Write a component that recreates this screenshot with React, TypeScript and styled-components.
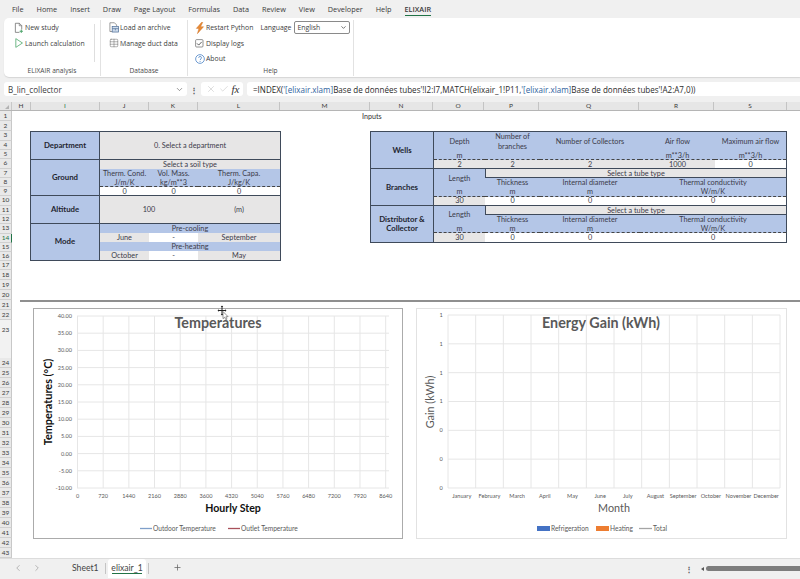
import { FC, ReactNode } from 'react';
import styled, { createGlobalStyle } from 'styled-components';
import { Check, ChevronDown, ChevronLeft, ChevronRight, Plus, Table, X } from 'lucide-react';

const GlobalStyle = createGlobalStyle`
  html, body {
    margin: 0;
    padding: 0;
    background: #fff;
  }
  #root {
    width: 800px;
    height: 579px;
    overflow: hidden;
  }
`;

const UI = `"Open Sans", "Noto Sans", sans-serif`;
const CELL = `Lato, "Liberation Sans", sans-serif`;
const BLUE = '#b4c6e7';
const GRAY = '#e7e6e6';
const EDGE = '#3f4a5a';

const Page = styled.div`
  position: relative;
  width: 800px;
  height: 579px;
  display: flex;
  flex-direction: column;
  background: #f0f0f0;
  font-family: ${UI};
  color: #333;
  overflow: hidden;
`;

/* ---------- ribbon ---------- */

const TabBar = styled.div`
  height: 18px;
  display: flex;
  align-items: center;
  gap: 13px;
  padding-left: 12px;
  font-size: 7.3px;
  color: #3a3a3a;
`;

const RibbonTab = styled.span<{ $active?: boolean }>`
  position: relative;
  line-height: 18px;
  font-weight: ${({ $active }) => ($active ? 600 : 400)};

  &::after {
    content: '';
    display: ${({ $active }) => ($active ? 'block' : 'none')};
    position: absolute;
    left: 0;
    right: 0;
    bottom: 2px;
    height: 1.5px;
    background: #217346;
  }
`;

const Ribbon = styled.div`
  height: 60px;
  margin-left: 4px;
  display: flex;
  background: #fff;
  border-radius: 5px 0 0 5px;
  box-shadow: 0 1px 1px #d5d5d5;
`;

const RibbonGroup = styled.div<{ $width: number; $pad: number }>`
  position: relative;
  box-sizing: border-box;
  width: ${({ $width }) => $width}px;
  height: 56px;
  margin-top: 2px;
  border-right: 1px solid #e2e2e2;
  padding-left: ${({ $pad }) => $pad}px;
`;

const GroupLabel = styled.div`
  position: absolute;
  left: 0;
  right: 0;
  top: 46px;
  text-align: center;
  font-size: 6.6px;
  line-height: 10px;
  color: #4a4a4a;
`;

const GroupDivider = styled.div`
  position: absolute;
  left: 90px;
  top: 4px;
  height: 38px;
  width: 1px;
  background: #dedede;
`;

const ActionRow = styled.div`
  height: 15.5px;
  display: flex;
  align-items: center;
  font-size: 6.9px;
  color: #404040;
  white-space: nowrap;
`;

const IconSlot = styled.span`
  width: 11px;
  height: 12px;
  flex: none;
  display: flex;
  align-items: center;
  justify-content: flex-start;
`;

const LanguageLabel = styled.span`
  margin-left: 7px;
`;

const LanguageSelect = styled.div`
  box-sizing: border-box;
  flex: none;
  width: 56px;
  height: 13px;
  margin-left: 3px;
  padding: 0 2px;
  display: flex;
  align-items: center;
  justify-content: space-between;
  border: 1px solid #8a8a8a;
  border-radius: 2px;
`;

/* ---------- formula bar ---------- */

const FormulaBar = styled.div`
  height: 15px;
  margin-top: 5px;
  padding-left: 4px;
  display: flex;
  align-items: stretch;
  font-size: 8.1px;
  white-space: nowrap;
`;

const NameBox = styled.div`
  width: 183px;
  padding: 0 3px 0 4px;
  box-sizing: border-box;
  display: flex;
  align-items: center;
  justify-content: space-between;
  background: #fff;
  border-radius: 3px;
  color: #404040;
`;

const Grip = styled.div`
  width: 14px;
  display: flex;
  align-items: center;
  justify-content: center;
  font-weight: 700;
  font-size: 8px;
  color: #555;
`;

const FormulaButtons = styled.div`
  width: 42px;
  display: flex;
  align-items: center;
  justify-content: space-around;
  padding: 0 2px 0 3px;
  box-sizing: border-box;
  background: #fff;
  border-radius: 3px;
`;

const FxMark = styled.span`
  font-family: "Liberation Serif", serif;
  font-style: italic;
  font-size: 11px;
  color: #333;
`;

const FormulaInput = styled.div`
  flex: 1;
  margin-left: 4px;
  padding-left: 6px;
  display: flex;
  align-items: center;
  background: #fff;
  border-radius: 3px 0 0 3px;
  font-size: 8.05px;
  color: #2b2b2b;
`;

const Ref = styled.span`
  color: #2f5f9e;
`;

/* ---------- sheet headers ---------- */

const ColumnHeader = styled.div`
  height: 8px;
  margin-top: 6px;
  display: flex;
  background: #e6e6e6;
  border-bottom: 1px solid #b5b5b5;
  box-sizing: content-box;
`;

const CornerCell = styled.div`
  position: relative;
  width: 12px;
  flex: none;
  box-sizing: border-box;
  border-right: 1px solid #c8c8c8;

  &::after {
    content: '';
    position: absolute;
    right: 2px;
    bottom: 1px;
    border-style: solid;
    border-width: 0 0 4px 4px;
    border-color: transparent transparent #b3b3b3 transparent;
  }
`;

const ColumnCell = styled.div<{ $width: number; $active?: boolean }>`
  width: ${({ $width }) => $width}px;
  flex: none;
  box-sizing: border-box;
  border-right: 1px solid #c4c4c4;
  text-align: center;
  font-family: ${CELL};
  font-size: 6.5px;
  line-height: 8px;
  color: ${({ $active }) => ($active ? '#217346' : '#3c3c3c')};
`;

const SheetBody = styled.div`
  height: 447px;
  display: flex;
  background: #fff;
`;

const RowHeader = styled.div`
  width: 12px;
  flex: none;
  display: flex;
  flex-direction: column;
  background: #e9e9e9;
`;

const RowCell = styled.div<{ $height: number; $active?: boolean; $tall?: boolean }>`
  height: ${({ $height }) => $height}px;
  box-sizing: border-box;
  border-bottom: ${({ $tall }) => ($tall ? 'none' : '1px solid #d0d0d0')};
  border-right: 1px solid ${({ $active }) => ($active ? '#217346' : '#c8c8c8')};
  text-align: center;
  font-family: ${CELL};
  font-size: 6.5px;
  line-height: ${({ $tall, $height }) => ($tall ? '20px' : `${$height - 1}px`)};
  color: ${({ $active }) => ($active ? '#217346' : '#3c3c3c')};
  background: ${({ $tall }) => ($tall ? '#f2f2f2' : 'transparent')};
`;

const Canvas = styled.div`
  flex: 1;
  display: flex;
  flex-direction: column;
  font-family: ${CELL};
`;

const SheetTitle = styled.div`
  height: 20px;
  padding-left: 350px;
  font-size: 7.2px;
  line-height: 11px;
  color: #333;
`;

const TablesRow = styled.div`
  height: 130px;
  padding-left: 18px;
  display: flex;
  gap: 89px;
  align-items: flex-start;
`;

const SectionLine = styled.div`
  height: 1.5px;
  margin: 39px 0 6.5px 8px;
  background: #8f8f8f;
`;

const ChartsRow = styled.div`
  padding-left: 21px;
  display: flex;
  gap: 13px;
`;

/* ---------- input tables ---------- */

const InputTable = styled.div<{ $columns: string; $rows: number; $height: number }>`
  box-sizing: border-box;
  height: ${({ $height }) => $height}px;
  display: grid;
  grid-template-columns: ${({ $columns }) => $columns};
  grid-template-rows: repeat(${({ $rows }) => $rows}, minmax(0, 1fr));
  border: 1px solid ${EDGE};
  font-size: 7.3px;
  color: #3b3b4a;
  background: ${GRAY};
`;

interface ICellProps {
  $col: string;
  $row: string;
  $fill?: string;
  $bold?: boolean;
  $dashed?: boolean;
  $line?: boolean;
  $rightLine?: boolean;
  $leftLine?: boolean;
}

const Cell = styled.div<ICellProps>`
  grid-column: ${({ $col }) => $col};
  grid-row: ${({ $row }) => $row};
  box-sizing: border-box;
  min-width: 0;
  min-height: 0;
  padding-top: ${({ $line, $dashed }) => ($line || $dashed ? '1px' : '0')};
  display: flex;
  align-items: center;
  justify-content: center;
  text-align: center;
  line-height: 9.5px;
  white-space: pre-line;
  background: ${({ $fill }) => $fill || 'transparent'};
  font-weight: ${({ $bold }) => ($bold ? 700 : 400)};
  color: ${({ $bold }) => ($bold ? '#1f2530' : 'inherit')};
  font-size: ${({ $bold }) => ($bold ? '7.8px' : 'inherit')};
  border-bottom: ${({ $dashed, $line }) =>
    $line ? `1px solid ${EDGE}` : $dashed ? '1px dashed #444' : 'none'};
  border-right: ${({ $rightLine }) => ($rightLine ? `1px solid ${EDGE}` : 'none')};
  border-left: ${({ $leftLine }) => ($leftLine ? `1px solid ${EDGE}` : 'none')};
`;

const LeftTable: FC = () => (
  <InputTable $columns="69px 49px 49px 82px" $rows={14} $height={130}>
    <Cell $col="1" $row="1 / 4" $fill={BLUE} $bold $line $rightLine>Department</Cell>
    <Cell $col="2 / 5" $row="1 / 4" $fill={GRAY} $line>0. Select a department</Cell>

    <Cell $col="1" $row="4 / 8" $fill={BLUE} $bold $line $rightLine>Ground</Cell>
    <Cell $col="2 / 5" $row="4" $fill={GRAY}>Select a soil type</Cell>
    <Cell $col="2" $row="5" $fill={BLUE}>Therm. Cond.</Cell>
    <Cell $col="3" $row="5" $fill={BLUE}>Vol. Mass.</Cell>
    <Cell $col="4" $row="5" $fill={BLUE}>Therm. Capa.</Cell>
    <Cell $col="2" $row="6" $fill={BLUE} $dashed>J/m/K</Cell>
    <Cell $col="3" $row="6" $fill={BLUE} $dashed>kg/m**3</Cell>
    <Cell $col="4" $row="6" $fill={BLUE} $dashed>J/kg/K</Cell>
    <Cell $col="2" $row="7" $fill="#fff" $line>0</Cell>
    <Cell $col="3" $row="7" $fill="#fff" $line>0</Cell>
    <Cell $col="4" $row="7" $fill="#fff" $line>0</Cell>

    <Cell $col="1" $row="8 / 11" $fill={BLUE} $bold $line $rightLine>Altitude</Cell>
    <Cell $col="2 / 4" $row="8 / 11" $fill={GRAY} $line>100</Cell>
    <Cell $col="4" $row="8 / 11" $fill={GRAY} $line>(m)</Cell>

    <Cell $col="1" $row="11 / 15" $fill={BLUE} $bold $rightLine>Mode</Cell>
    <Cell $col="2 / 5" $row="11" $fill={BLUE}>Pre-cooling</Cell>
    <Cell $col="2" $row="12" $fill={GRAY}>June</Cell>
    <Cell $col="3" $row="12" $fill="#fff">-</Cell>
    <Cell $col="4" $row="12" $fill={GRAY}>September</Cell>
    <Cell $col="2 / 5" $row="13" $fill={BLUE}>Pre-heating</Cell>
    <Cell $col="2" $row="14" $fill={GRAY}>October</Cell>
    <Cell $col="3" $row="14" $fill="#fff">-</Cell>
    <Cell $col="4" $row="14" $fill={GRAY}>May</Cell>
  </InputTable>
);

const TubeSection: FC<{ label: string; start: number; last?: boolean }> = ({ label, start, last }) => (
  <>
    <Cell $col="1" $row={`${start} / ${start + 4}`} $fill={BLUE} $bold $line={!last} $rightLine>{label}</Cell>
    <Cell $col="2" $row={`${start} / ${start + 2}`} $fill={BLUE}>Length</Cell>
    <Cell $col="3 / 7" $row={`${start}`} $fill={GRAY} $line $leftLine>Select a tube type</Cell>
    <Cell $col="3" $row={`${start + 1}`} $fill={BLUE}>Thickness</Cell>
    <Cell $col="4" $row={`${start + 1}`} $fill={BLUE}>Internal diameter</Cell>
    <Cell $col="5 / 7" $row={`${start + 1}`} $fill={BLUE}>Thermal conductivity</Cell>
    <Cell $col="2" $row={`${start + 2}`} $fill={BLUE} $dashed>m</Cell>
    <Cell $col="3" $row={`${start + 2}`} $fill={BLUE} $dashed>m</Cell>
    <Cell $col="4" $row={`${start + 2}`} $fill={BLUE} $dashed>m</Cell>
    <Cell $col="5 / 7" $row={`${start + 2}`} $fill={BLUE} $dashed>W/m/K</Cell>
    <Cell $col="2" $row={`${start + 3}`} $fill={GRAY} $line={!last}>30</Cell>
    <Cell $col="3" $row={`${start + 3}`} $fill="#fff" $line={!last}>0</Cell>
    <Cell $col="4" $row={`${start + 3}`} $fill="#fff" $line={!last}>0</Cell>
    <Cell $col="5 / 7" $row={`${start + 3}`} $fill="#fff" $line={!last}>0</Cell>
  </>
);

const RightTable: FC = () => (
  <InputTable $columns="63px 51px 55px 100px 75px 71px" $rows={12} $height={112}>
    <Cell $col="1" $row="1 / 5" $fill={BLUE} $bold $line $rightLine>Wells</Cell>
    <Cell $col="2" $row="1 / 3" $fill={BLUE}>Depth</Cell>
    <Cell $col="3" $row="1 / 3" $fill={BLUE}>{'Number of\nbranches'}</Cell>
    <Cell $col="4" $row="1 / 3" $fill={BLUE}>Number of Collectors</Cell>
    <Cell $col="5" $row="1 / 3" $fill={BLUE}>Air flow</Cell>
    <Cell $col="6" $row="1 / 3" $fill={BLUE}>Maximum air flow</Cell>
    <Cell $col="2" $row="3" $fill={BLUE} $dashed>m</Cell>
    <Cell $col="3" $row="3" $fill={BLUE} $dashed />
    <Cell $col="4" $row="3" $fill={BLUE} $dashed />
    <Cell $col="5" $row="3" $fill={BLUE} $dashed>m**3/h</Cell>
    <Cell $col="6" $row="3" $fill={BLUE} $dashed>m**3/h</Cell>
    <Cell $col="2" $row="4" $fill={GRAY} $line>2</Cell>
    <Cell $col="3" $row="4" $fill={GRAY} $line>2</Cell>
    <Cell $col="4" $row="4" $fill={GRAY} $line>2</Cell>
    <Cell $col="5" $row="4" $fill={GRAY} $line>1000</Cell>
    <Cell $col="6" $row="4" $fill="#fff" $line>0</Cell>
    <TubeSection label="Branches" start={5} />
    <TubeSection label={'Distributor &\nCollector'} start={9} last />
  </InputTable>
);

/* ---------- charts ---------- */

const ChartCard = styled.div<{ $width: number; $soft?: boolean }>`
  box-sizing: border-box;
  width: ${({ $width }) => $width}px;
  height: 231px;
  background: #fff;
  border: 1px solid ${({ $soft }) => ($soft ? '#e2e2e2' : '#ababab')};
`;

const ChartSvg = styled.svg`
  display: block;
  font-family: ${CELL};
`;

const GridLine = styled.line`
  stroke: #e6e6e6;
  stroke-width: 1;
`;

const AxisText = styled.text`
  font-size: 5.6px;
  fill: #595959;
`;

const ChartTitle = styled.text`
  font-size: 14.3px;
  font-weight: 700;
  fill: #595959;
`;

const AxisTitle = styled.text<{ $strong?: boolean; $size: number }>`
  font-size: ${({ $size }) => $size}px;
  font-weight: ${({ $strong }) => ($strong ? 700 : 400)};
  fill: ${({ $strong }) => ($strong ? '#111' : '#595959')};
`;

const LegendText = styled.text`
  font-size: 6.6px;
  fill: #595959;
`;

const TemperatureChart: FC = () => {
  const hours = Array.from({ length: 13 }, (_, i) => i * 720);
  const temps = Array.from({ length: 11 }, (_, i) => 40 - i * 5);
  const xAt = (i: number) => 77.5 + i * 25.68;
  const yAt = (i: number) => 316 + i * 17.2;

  return (
    <ChartCard $width={370}>
      <ChartSvg width={368} height={229} viewBox="34 309 368 229">
        {temps.map((t, i) => (
          <g key={t}>
            <GridLine x1={77} x2={389} y1={yAt(i)} y2={yAt(i)} />
            <AxisText x={72} y={yAt(i) + 2} textAnchor="end">{t.toFixed(2)}</AxisText>
          </g>
        ))}
        {hours.map((h, i) => (
          <g key={h}>
            <GridLine x1={xAt(i)} x2={xAt(i)} y1={316} y2={488} />
            <AxisText x={xAt(i)} y={498} textAnchor="middle">{h}</AxisText>
          </g>
        ))}
        <ChartTitle x={218} y={328} textAnchor="middle">Temperatures</ChartTitle>
        <AxisTitle $strong $size={10.9} textAnchor="middle" transform="translate(52 402) rotate(-90)">
          Temperatures (°C)
        </AxisTitle>
        <AxisTitle $strong $size={10.6} x={233} y={512} textAnchor="middle">Hourly Step</AxisTitle>
        <line x1={140} x2={152} y1={528.5} y2={528.5} stroke="#7f9fca" strokeWidth={1.3} />
        <LegendText x={153} y={531}>Outdoor Temperature</LegendText>
        <line x1={228} x2={240} y1={528.5} y2={528.5} stroke="#a8505a" strokeWidth={1.3} />
        <LegendText x={241} y={531}>Outlet Temperature</LegendText>
      </ChartSvg>
    </ChartCard>
  );
};

const MONTHS = ['January', 'February', 'March', 'April', 'May', 'June', 'July', 'August', 'September', 'October', 'November', 'December'];
const GAIN_TICKS = ['1', '1', '1', '1', '0', '0', '0'];

const EnergyChart: FC = () => {
  const xAt = (i: number) => 448 + i * 27.67;
  const yAt = (i: number) => 315 + i * 28.83;

  return (
    <ChartCard $width={371} $soft>
      <ChartSvg width={369} height={229} viewBox="417 309 369 229">
        {GAIN_TICKS.map((t, i) => (
          <g key={i}>
            <GridLine x1={448} x2={780} y1={yAt(i)} y2={yAt(i)} />
            <AxisText x={441} y={yAt(i) + 2} textAnchor="middle">{t}</AxisText>
          </g>
        ))}
        {Array.from({ length: 13 }, (_, i) => (
          <GridLine key={i} x1={xAt(i)} x2={xAt(i)} y1={315} y2={488} />
        ))}
        {MONTHS.map((m, i) => (
          <AxisText key={m} x={xAt(i) + 13.8} y={498} textAnchor="middle">{m}</AxisText>
        ))}
        <ChartTitle x={601} y={328} textAnchor="middle">Energy Gain (kWh)</ChartTitle>
        <AxisTitle $size={10.8} textAnchor="middle" transform="translate(434 402) rotate(-90)">
          Gain (kWh)
        </AxisTitle>
        <AxisTitle $size={10.8} x={614} y={512} textAnchor="middle">Month</AxisTitle>
        <rect x={537} y={526} width={13} height={5} fill="#4472c4" />
        <LegendText x={551} y={531}>Refrigeration</LegendText>
        <rect x={596} y={526} width={13} height={5} fill="#ed7d31" />
        <LegendText x={610} y={531}>Heating</LegendText>
        <line x1={639} x2={652} y1={528.5} y2={528.5} stroke="#a5a5a5" strokeWidth={1.3} />
        <LegendText x={653} y={531}>Total</LegendText>
      </ChartSvg>
    </ChartCard>
  );
};

/* ---------- sheet tabs ---------- */

const SheetTabs = styled.div`
  height: 21px;
  display: flex;
  align-items: flex-start;
  background: #f0f0f0;
  border-top: 1px solid #dcdcdc;
  box-sizing: border-box;
`;

const NavArrows = styled.div`
  width: 72px;
  padding: 4px 0 0 13px;
  box-sizing: border-box;
  display: flex;
  gap: 9px;
  flex: none;
`;

const SheetName = styled.div<{ $active?: boolean }>`
  position: relative;
  box-sizing: border-box;
  height: 19px;
  line-height: 18px;
  font-family: ${CELL};
  font-size: 8.6px;
  color: #444;
  width: ${({ $active }) => ($active ? 38 : 33)}px;
  margin-right: ${({ $active }) => ($active ? 2 : 0)}px;
  background: ${({ $active }) => ($active ? '#fff' : 'transparent')};
  border-radius: 3px 3px 0 0;
  text-align: ${({ $active }) => ($active ? 'center' : 'left')};

  &::after {
    content: '';
    display: ${({ $active }) => ($active ? 'block' : 'none')};
    position: absolute;
    left: 4px;
    right: 4px;
    top: 13.5px;
    height: 1.5px;
    background: #217346;
  }
`;

const TabSeparator = styled.div`
  width: 1px;
  height: 11px;
  margin: 4px 2px 0 0;
  background: #c4c4c4;
`;

const AddSheet = styled.div`
  margin: 4px 0 0 22px;
  display: flex;
`;

const ScrollArea = styled.div`
  flex: 1;
  height: 19px;
  display: flex;
  align-items: center;
  justify-content: flex-end;
`;

const ScrollLeft = styled.div`
  width: 0;
  height: 0;
  margin: 0 2px 0 5px;
  border-style: solid;
  border-width: 2.5px 3px 2.5px 0;
  border-color: transparent #555 transparent transparent;
`;

const ScrollThumb = styled.div`
  width: 94px;
  height: 5px;
  background: #7d7d7d;
  border-radius: 2.5px 0 0 2.5px;
`;

const MoveCursor = styled.svg`
  position: absolute;
  left: 216px;
  top: 305px;
`;

const action = (icon: ReactNode, label: ReactNode) => (
  <ActionRow>
    <IconSlot>{icon}</IconSlot>
    {label}
  </ActionRow>
);

const NewStudyIcon = () => (
  <svg width="10" height="12" viewBox="0 0 11 12" fill="none">
    <path d="M1.5 .8h4.4l2.6 2.6v4.2M1.5 .8v10h4.5" stroke="#666" strokeWidth=".8" />
    <path d="M5.8 .8v2.7h2.7" stroke="#666" strokeWidth=".7" />
    <path d="M8 7.8v3.6M6.2 9.6h3.6" stroke="#4ca36a" strokeWidth="1.1" />
  </svg>
);

const PlayIcon = () => (
  <svg width="10" height="12" viewBox="0 0 11 12" fill="none">
    <path d="M2 1.2 9.3 6 2 10.8z" stroke="#62b27c" strokeWidth="1" strokeLinejoin="round" />
  </svg>
);

const ArchiveIcon = () => (
  <svg width="10" height="11" viewBox="0 0 11 12" fill="none">
    <path d="M1 .8h5l2.4 2.4v1.5M1 .8v9.6h2.5" stroke="#777" strokeWidth=".8" />
    <rect x="3.5" y="5" width="7" height="6" fill="#cfdcec" stroke="#4f6f98" strokeWidth=".8" />
    <path d="M3.5 7.3h7M7 7.3v1.8" stroke="#4f6f98" strokeWidth=".8" />
  </svg>
);

const BoltIcon = () => (
  <svg width="10" height="12" viewBox="0 0 10 12">
    <path d="M6.6.3 1.3 6.4h2.6L2.4 11.7 8.6 4.7H5.6L7.8.3z" fill="#e88a34" stroke="#c96a1e" strokeWidth=".4" />
  </svg>
);

const CheckIcon = () => (
  <svg width="9" height="9" viewBox="0 0 9 9" fill="none">
    <rect x=".6" y=".6" width="7.4" height="7.4" rx="1" stroke="#666" strokeWidth=".7" />
    <path d="M2 4.4l1.7 1.7L6.7 2.9" stroke="#333" strokeWidth=".8" />
  </svg>
);

const AboutIcon = () => (
  <svg width="10" height="10" viewBox="0 0 11 11" fill="none">
    <circle cx="5.5" cy="5.5" r="4.8" stroke="#4f86c6" strokeWidth=".9" />
    <path d="M4 4.2c0-2 3.2-2 3.2 0 0 1.2-1.6 1.2-1.6 2.5" stroke="#4f86c6" strokeWidth=".9" />
    <circle cx="5.6" cy="8.2" r=".55" fill="#4f86c6" />
  </svg>
);

const COLUMNS: [string, number][] = [
  ['H', 19], ['I', 69], ['J', 49], ['K', 49], ['L', 82], ['M', 90], ['N', 63],
  ['O', 51], ['P', 55], ['Q', 100], ['R', 75], ['S', 73],
];

const rowHeight = (n: number) => {
  if (n >= 3 && n <= 16) return 130 / 14;
  if (n === 17) return 9;
  if (n === 23) return 38;
  return 10;
};

const ROWS = Array.from({ length: 43 }, (_, i) => i + 1);

export default function App() {
  return (
    <Page>
      <GlobalStyle />

      <TabBar>
        {['File', 'Home', 'Insert', 'Draw', 'Page Layout', 'Formulas', 'Data', 'Review', 'View', 'Developer', 'Help'].map(name => (
          <RibbonTab key={name}>{name}</RibbonTab>
        ))}
        <RibbonTab $active>ELIXAIR</RibbonTab>
      </TabBar>

      <Ribbon>
        <RibbonGroup $width={97} $pad={10}>
          {action(<NewStudyIcon />, 'New study')}
          {action(<PlayIcon />, 'Launch calculation')}
          <GroupDivider />
          <GroupLabel>ELIXAIR analysis</GroupLabel>
        </RibbonGroup>
        <RibbonGroup $width={87} $pad={8}>
          {action(<ArchiveIcon />, 'Load an archive')}
          {action(<Table size={10} color="#666" strokeWidth={1.2} />, 'Manage duct data')}
          <GroupLabel>Database</GroupLabel>
        </RibbonGroup>
        <RibbonGroup $width={166} $pad={7}>
          <ActionRow>
            <IconSlot><BoltIcon /></IconSlot>
            Restart Python
            <LanguageLabel>Language</LanguageLabel>
            <LanguageSelect>
              English
              <ChevronDown size={7} color="#444" strokeWidth={2.5} />
            </LanguageSelect>
          </ActionRow>
          {action(<CheckIcon />, 'Display logs')}
          {action(<AboutIcon />, 'About')}
          <GroupLabel>Help</GroupLabel>
        </RibbonGroup>
      </Ribbon>

      <FormulaBar>
        <NameBox>
          B_lin_collector
          <ChevronDown size={9} color="#555" strokeWidth={1.6} />
        </NameBox>
        <Grip>⋮</Grip>
        <FormulaButtons>
          <X size={10} color="#c4c4c4" strokeWidth={1.4} />
          <Check size={10} color="#c4c4c4" strokeWidth={1.4} />
          <FxMark>fx</FxMark>
        </FormulaButtons>
        <FormulaInput>
          <span>
            =INDEX(<Ref>'[elixair.xlam]</Ref>Base de données tubes'!I2:I7,MATCH(elixair_1!P11,<Ref>'[elixair.xlam]</Ref>Base de données tubes'!A2:A7,0))
          </span>
        </FormulaInput>
      </FormulaBar>

      <ColumnHeader>
        <CornerCell />
        {COLUMNS.map(([name, width]) => (
          <ColumnCell key={name} $width={width} $active={name === 'I'}>{name}</ColumnCell>
        ))}
      </ColumnHeader>

      <SheetBody>
        <RowHeader>
          {ROWS.map(n => (
            <RowCell key={n} $height={rowHeight(n)} $active={n === 14} $tall={n === 23}>{n}</RowCell>
          ))}
        </RowHeader>
        <Canvas>
          <SheetTitle>Inputs</SheetTitle>
          <TablesRow>
            <LeftTable />
            <RightTable />
          </TablesRow>
          <SectionLine />
          <ChartsRow>
            <TemperatureChart />
            <EnergyChart />
          </ChartsRow>
        </Canvas>
      </SheetBody>

      <SheetTabs>
        <NavArrows>
          <ChevronLeft size={10} color="#aaa" />
          <ChevronRight size={10} color="#aaa" />
        </NavArrows>
        <SheetName>Sheet1</SheetName>
        <TabSeparator />
        <SheetName $active>elixair_1</SheetName>
        <TabSeparator />
        <AddSheet><Plus size={9} color="#666" strokeWidth={2} /></AddSheet>
        <ScrollArea>
          <Grip>⋮</Grip>
          <ScrollLeft />
          <ScrollThumb />
        </ScrollArea>
      </SheetTabs>

      <MoveCursor width="14" height="16" viewBox="0 0 14 16" fill="none">
        <path d="M6 1v9M2 5.5h8" stroke="#222" strokeWidth="1" />
        <path d="M6 .5 4.8 2h2.4zM6 10.5 4.8 9h2.4zM1.5 5.5 3 4.3v2.4zM10.5 5.5 9 4.3v2.4z" fill="#222" />
        <path d="M7 6.5v7.2l1.7-1.5 1.1 2.5 1.2-.6-1.1-2.4h2.2z" fill="#fff" stroke="#555" strokeWidth=".6" />
      </MoveCursor>
    </Page>
  );
}
